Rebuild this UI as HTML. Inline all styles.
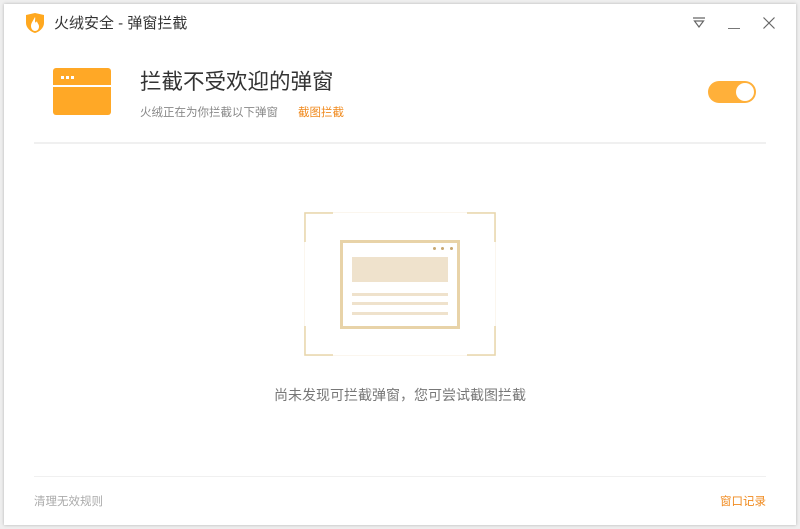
<!DOCTYPE html>
<html><head><meta charset="utf-8"><style>
*{margin:0;padding:0;box-sizing:border-box}
body{width:800px;height:529px;background:#efefef;position:relative;overflow:hidden;font-family:"Liberation Sans","Noto Sans CJK SC",sans-serif}
.win{position:absolute;left:4px;top:4px;width:792px;height:521px;background:#fff;box-shadow:0 0 3px rgba(0,0,0,.25)}
.a{position:absolute;white-space:nowrap}
</style></head><body>
<div class="win"></div>
<svg class="a" style="left:25px;top:12px" width="20" height="22" viewBox="0 0 20 22">
<path d="M1 3 L10 1 L19 3 L19 11 C19 16 14 20 10 21 C6 20 1 16 1 11 Z" fill="#ffa81f"/>
<path d="M10 5 C8 9 6 11 6 14 C6 17 8 19 10 19 C12.5 19 14 17 14 14.5 C14 12 12 11 12 9 C11 11 10 11 10 9 C10 7.5 10.5 6 10 5Z" fill="#fff"/>
</svg>
<div class="a" style="left:54px;top:12px;font-size:15px;color:#333">火绒安全 - 弹窗拦截</div>
<svg class="a" style="left:692px;top:16px" width="14" height="14" viewBox="0 0 14 14"><path d="M1 2H13M2.5 5H11.5L7 11Z" fill="none" stroke="#666" stroke-width="1.2"/></svg>
<div class="a" style="left:728px;top:28px;width:12px;height:1px;background:#777"></div>
<svg class="a" style="left:762px;top:16px" width="14" height="14" viewBox="0 0 14 14"><path d="M1.5 1.5L12.5 12.5M12.5 1.5L1.5 12.5" stroke="#666" stroke-width="1.2"/></svg>
<div class="a" style="left:53px;top:68px;width:58px;height:47px;background:#ffa826;border-radius:3px"></div>
<div class="a" style="left:53px;top:85px;width:58px;height:2px;background:#fff"></div>
<div class="a" style="left:61px;top:76px;width:3px;height:3px;background:#fff;box-shadow:5px 0 #fff,10px 0 #fff"></div>
<div class="a" style="left:140px;top:65px;font-size:21.5px;color:#333">拦截不受欢迎的弹窗</div>
<div class="a" style="left:140px;top:104px;font-size:11.5px;color:#888">火绒正在为你拦截以下弹窗</div>
<div class="a" style="left:298px;top:104px;font-size:11.5px;color:#f08a1e">截图拦截</div>
<div class="a" style="left:708px;top:81px;width:48px;height:22px;border-radius:11px;background:#ffb03a"></div>
<div class="a" style="left:736px;top:83px;width:18px;height:18px;border-radius:9px;background:#fff"></div>
<div class="a" style="left:34px;top:142px;width:732px;height:2px;background:#f0f0f0"></div>
<div class="a" style="left:304px;top:212px;width:192px;height:144px;border:1px solid #fbf6ee"></div>
<svg class="a" style="left:304px;top:212px" width="192" height="144" viewBox="0 0 192 144" fill="none" stroke="#e8d5ac" stroke-width="1.5">
<path d="M1 30V1H29M163 1H191V30M191 114V143H163M29 143H1V114"/>
</svg>
<div class="a" style="left:340px;top:240px;width:120px;height:89px;border:3px solid #e8d3a8"></div>
<div class="a" style="left:433px;top:247px;width:3px;height:3px;border-radius:2px;background:#c8a871;box-shadow:8px 0 #c8a871,17px 0 #c8a871"></div>
<div class="a" style="left:352px;top:257px;width:96px;height:25px;background:#efe2cc"></div>
<div class="a" style="left:352px;top:293px;width:96px;height:3px;background:#efe2cc"></div>
<div class="a" style="left:352px;top:302px;width:96px;height:3px;background:#efe2cc"></div>
<div class="a" style="left:352px;top:312px;width:96px;height:3px;background:#efe2cc"></div>
<div class="a" style="left:0;width:800px;text-align:center;top:385px;font-size:14px;color:#777">尚未发现可拦截弹窗，您可尝试截图拦截</div>
<div class="a" style="left:34px;top:476px;width:732px;height:1px;background:#f0f0f0"></div>
<div class="a" style="left:34px;top:493px;font-size:11.5px;color:#aaa">清理无效规则</div>
<div class="a" style="left:720px;top:493px;font-size:11.5px;color:#f08a1e">窗口记录</div>
</body></html>
